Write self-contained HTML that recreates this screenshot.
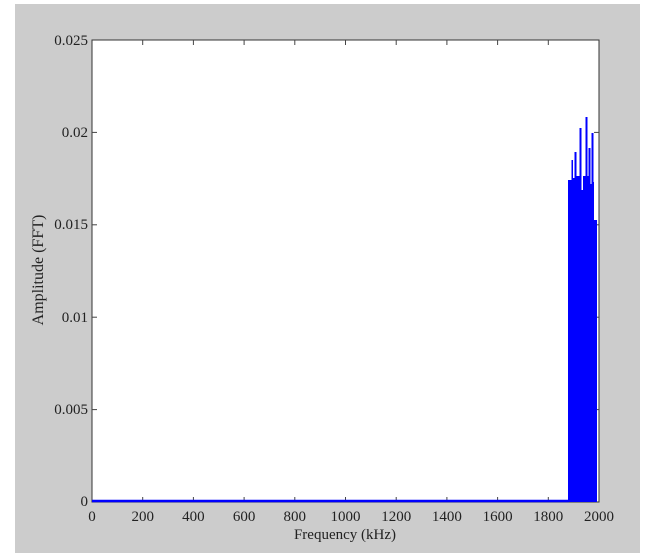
<!DOCTYPE html>
<html><head><style>html,body{margin:0;padding:0;background:#fff;width:652px;height:557px;overflow:hidden}</style></head>
<body>
<svg width="652" height="557" xmlns="http://www.w3.org/2000/svg" font-family="Liberation Serif, serif" font-size="15" fill="#222">
<rect x="15" y="4" width="625" height="549" fill="#cccccc"/>
<rect x="92" y="40" width="507" height="462" fill="#fff" stroke="#333" stroke-width="1"/>
<g stroke="#444" stroke-width="1">
<line x1="142.7" y1="502" x2="142.7" y2="497"/><line x1="193.4" y1="502" x2="193.4" y2="497"/><line x1="244.1" y1="502" x2="244.1" y2="497"/><line x1="294.8" y1="502" x2="294.8" y2="497"/><line x1="345.5" y1="502" x2="345.5" y2="497"/><line x1="396.2" y1="502" x2="396.2" y2="497"/><line x1="446.9" y1="502" x2="446.9" y2="497"/><line x1="497.6" y1="502" x2="497.6" y2="497"/><line x1="548.3" y1="502" x2="548.3" y2="497"/>
<line x1="142.7" y1="40" x2="142.7" y2="45"/><line x1="193.4" y1="40" x2="193.4" y2="45"/><line x1="244.1" y1="40" x2="244.1" y2="45"/><line x1="294.8" y1="40" x2="294.8" y2="45"/><line x1="345.5" y1="40" x2="345.5" y2="45"/><line x1="396.2" y1="40" x2="396.2" y2="45"/><line x1="446.9" y1="40" x2="446.9" y2="45"/><line x1="497.6" y1="40" x2="497.6" y2="45"/><line x1="548.3" y1="40" x2="548.3" y2="45"/>
<line x1="92" y1="132.4" x2="97" y2="132.4"/><line x1="92" y1="224.8" x2="97" y2="224.8"/><line x1="92" y1="317.2" x2="97" y2="317.2"/><line x1="92" y1="409.6" x2="97" y2="409.6"/>
<line x1="599" y1="132.4" x2="594" y2="132.4"/><line x1="599" y1="224.8" x2="594" y2="224.8"/><line x1="599" y1="317.2" x2="594" y2="317.2"/><line x1="599" y1="409.6" x2="594" y2="409.6"/>
</g>
<line x1="92" y1="501" x2="569" y2="501" stroke="#0000ff" stroke-width="2.5"/>
<polygon fill="#0000ff" points="568,502 568,180 571.5,180 571.5,160 573,160 573,178 574.5,178 574.5,152 576.5,152 576.5,176 579.5,176 579.5,128 581.5,128 581.5,190 583,190 583,176 585.5,176 585.5,117 587.5,117 587.5,176 588.5,176 588.5,148 590.5,148 590.5,184 591.5,184 591.5,133 593.5,133 593.5,182 594,182 594,220 597,220 597,502"/>
<g text-anchor="end">
<text x="88" y="45">0.025</text><text x="88" y="137">0.02</text><text x="88" y="229">0.015</text><text x="88" y="322">0.01</text><text x="88" y="414">0.005</text><text x="88" y="506">0</text>
</g>
<g text-anchor="middle">
<text x="92" y="521">0</text><text x="142.7" y="521">200</text><text x="193.4" y="521">400</text><text x="244.1" y="521">600</text><text x="294.8" y="521">800</text><text x="345.5" y="521">1000</text><text x="396.2" y="521">1200</text><text x="446.9" y="521">1400</text><text x="497.6" y="521">1600</text><text x="548.3" y="521">1800</text><text x="599" y="521">2000</text>
<text x="345" y="539">Frequency (kHz)</text>
<text transform="translate(43,270) rotate(-90)" font-size="16">Amplitude (FFT)</text>
</g>
</svg>
</body></html>
